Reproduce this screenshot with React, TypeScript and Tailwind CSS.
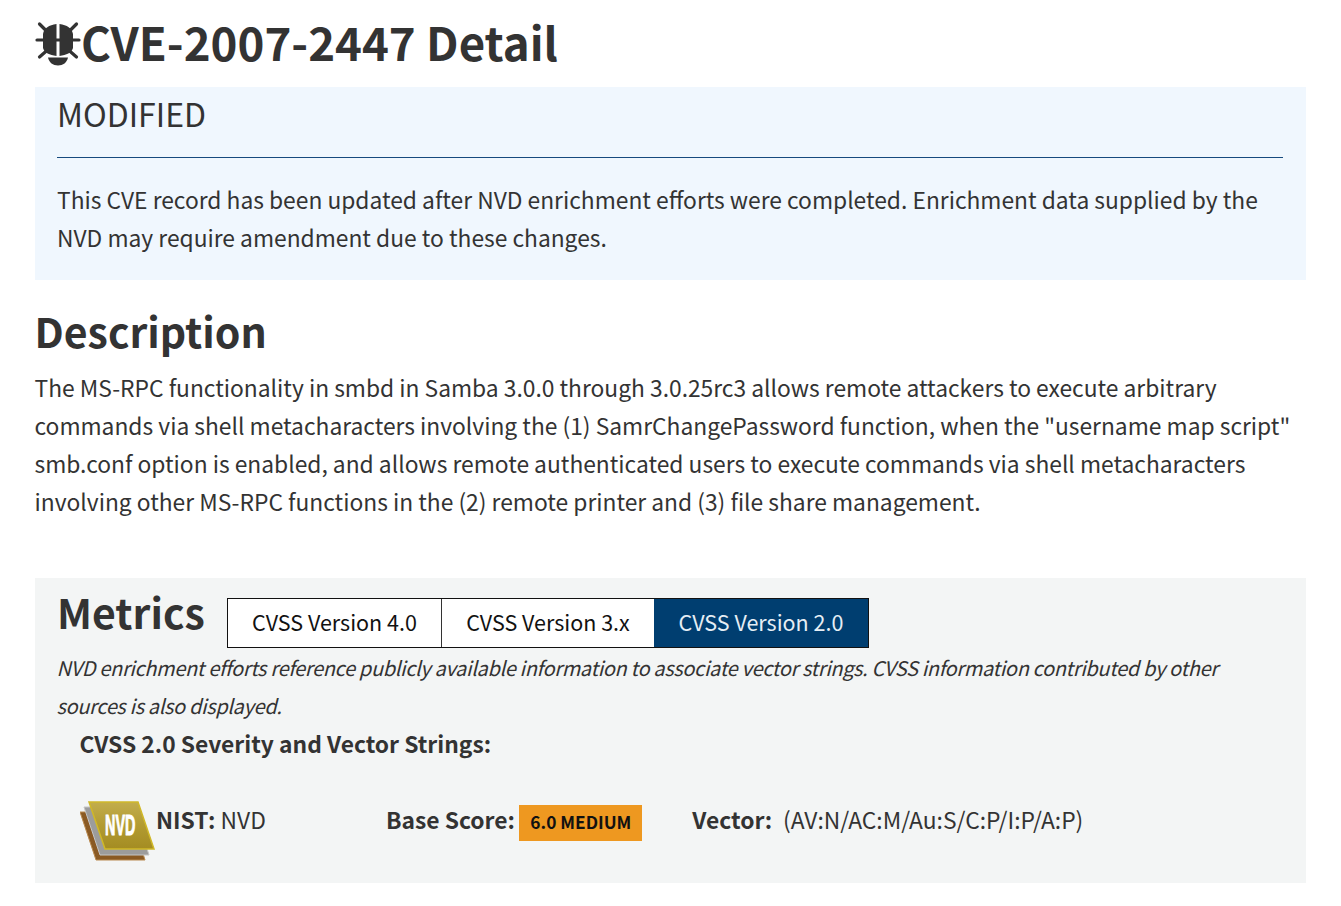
function BugIcon() {
  return (
    <svg viewBox="0 0 46 46" className="w-[46px] h-[46px] shrink-0" fill="none">
      <path d="M2 19h42M4.500 3l8 8M41.500 3l-8 8M4.500 36l8-7M41.500 36l-8-7" stroke="#333" strokeWidth="3.200" strokeLinecap="round" />
      <path d="M21.500 3v32c-7-1-12-3-13.500-8V13c1-6 6-9 13.500-10zM24.500 3v32c7-1 12-3 13.500-8V13c-1-6-6-9-13.500-10z" fill="#333" />
      <path d="M13 36.500h20c-1 5-5 8-10 8s-9-3-10-8z" fill="#333" />
    </svg>
  );
}

function NvdLogo() {
  return (
    <svg viewBox="0 0 76 61" className="w-[76px] h-[61px] shrink-0">
      <defs>
        <linearGradient id="gold" x1="0" y1="0" x2="0" y2="1">
          <stop offset="0" stopColor="#c2ad4c" />
          <stop offset="0.5" stopColor="#b29b32" />
          <stop offset="1" stopColor="#a48c22" />
        </linearGradient>
      </defs>
      <polygon points="0,12 50,12 65,60 16,60" fill="#8a5a24" stroke="#b98a50" strokeWidth="1" />
      <polygon points="4,7 54,7 69,55 20,55" fill="#9c9c9c" stroke="#c4c4c4" strokeWidth="1" />
      <polygon points="9,2 58,2 74,49 25,49" fill="url(#gold)" stroke="#d0b828" strokeWidth="1.500" />
      <text x="0" y="35" fill="#fff" stroke="#fff" strokeWidth="1" fontSize="30" fontWeight="700" fontFamily="'Liberation Sans', sans-serif" transform="translate(25 0) scale(0.48 1)">NVD</text>
    </svg>
  );
}

export default function App() {
  return (
    <div className="w-[1341px] h-[906px] bg-white text-[#333] pl-[34.500px] pt-[11px] font-['Noto_Sans_CJK_SC','Noto_Sans',sans-serif] overflow-hidden">
      <h1 className="flex items-center h-[66px] text-[45.6px] font-bold leading-none">
        <BugIcon />
        <span className="pb-[4px] ml-[0.5px]">CVE-2007-2447 Detail</span>
      </h1>
      <div className="mt-[10px] w-[1271px] h-[193px] bg-[#f0f7fe] px-[22.500px] pt-[7px]">
        <div className="text-[32px] leading-[38px] h-[64px] border-b border-[#164a7e]">MODIFIED</div>
        <p className="mt-[23px] text-[22.8px] leading-[38px]">
          This CVE record has been updated after NVD enrichment efforts were completed. Enrichment data supplied by the NVD may require amendment due to these changes.
        </p>
      </div>
      <h2 className="mt-[25px] text-[41px] font-bold leading-[50px]">Description</h2>
      <p className="mt-[14px] w-[1271px] text-[22.8px] leading-[38px]">
        The MS-RPC functionality in smbd in Samba 3.0.0 through 3.0.25rc3 allows remote attackers to execute arbitrary commands via shell metacharacters involving the (1) SamrChangePassword function, when the "username map script" smb.conf option is enabled, and allows remote authenticated users to execute commands via shell metacharacters involving other MS-RPC functions in the (2) remote printer and (3) file share management.
      </p>
      <div className="mt-[57px] w-[1271px] h-[305px] bg-[#f3f5f5] pl-[22.500px] pt-[8px]">
        <div className="flex items-start h-[63px]">
          <h2 className="text-[41px] font-bold leading-[50px] w-[170px]">Metrics</h2>
          <div className="flex mt-[12px] h-[50px] border border-[#111] text-[21.5px] text-[#111] leading-[46px]">
            <div className="w-[214px] text-center bg-white border-r border-[#333]">CVSS Version 4.0</div>
            <div className="w-[212px] text-center bg-white">CVSS Version 3.x</div>
            <div className="w-[214px] text-center bg-[#003e70] text-[#e6eef5]">CVSS Version 2.0</div>
          </div>
        </div>
        <p className="-ml-[0.5px] w-[1190px] italic text-[20px] tracking-[-0.35px] leading-[38px]">
          NVD enrichment efforts reference publicly available information to associate vector strings. CVSS information contributed by other sources is also displayed.
        </p>
        <h3 className="ml-[22.500px] text-[22.8px] font-bold leading-[38px]">CVSS 2.0 Severity and Vector Strings:</h3>
        <div className="ml-[23px] mt-[37px] flex items-start text-[22.8px] leading-[38px]">
          <NvdLogo />
          <div className="mt-[1px] w-[230px]"><b>NIST:</b> NVD</div>
          <div className="flex items-start mt-[1px]">
            <b>Base Score:</b>
            <span className="ml-[4.500px] mt-[4px] w-[123px] h-[36px] bg-[#ee9820] text-[#111] text-[17.3px] font-bold text-center leading-[33px]">6.0 MEDIUM</span>
          </div>
          <div className="mt-[1px] ml-[50px]"><b>Vector:</b><span className="ml-[11px]">(AV:N/AC:M/Au:S/C:P/I:P/A:P)</span></div>
        </div>
      </div>
    </div>
  );
}
